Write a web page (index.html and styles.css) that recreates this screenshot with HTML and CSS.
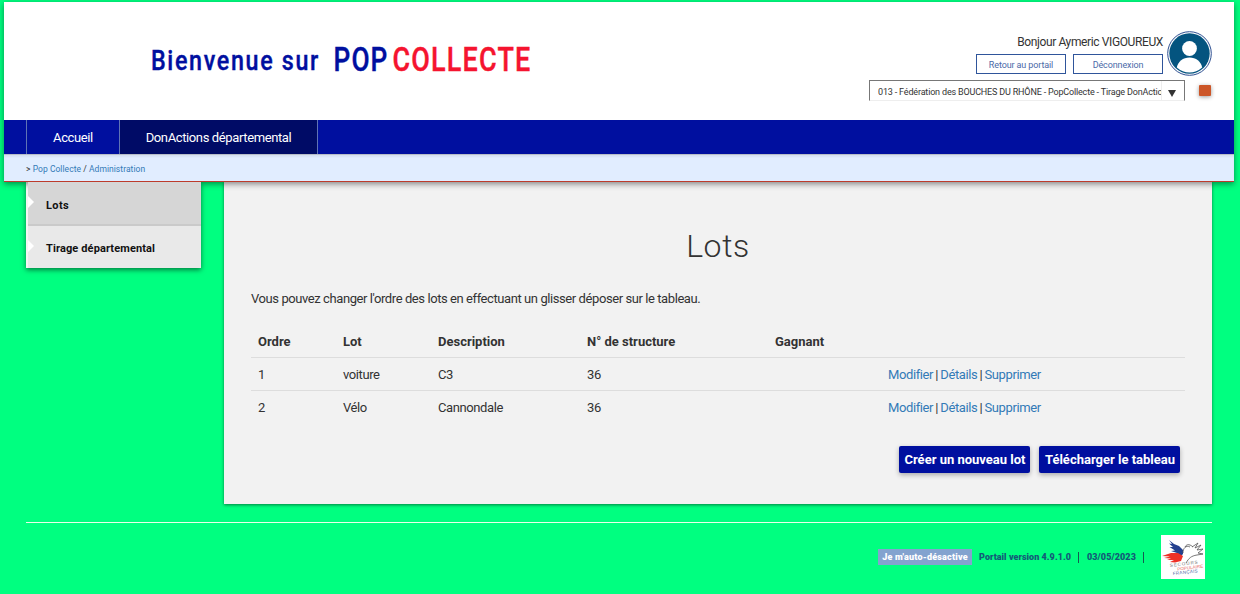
FILE: index.html
```html
<!DOCTYPE html>
<html lang="fr">
<head>
<meta charset="utf-8">
<title>Pop Collecte - Lots</title>
<link rel="stylesheet" href="styles.css">
</head>
<body>
<div class="top">
  <header class="header">
    <svg class="brand" width="400" height="50" viewBox="0 0 400 50">
      <text class="welcome" x="0" y="40" textLength="169" lengthAdjust="spacingAndGlyphs">Bienvenue sur</text>
      <text class="pop" x="182.500" y="41" textLength="55" lengthAdjust="spacingAndGlyphs">POP</text>
      <text class="collecte" x="241.500" y="41" textLength="139" lengthAdjust="spacingAndGlyphs">COLLECTE</text>
    </svg>
    <div class="account">
      <div class="account-row">
        <div class="account-info">
          <div class="hello">Bonjour Aymeric VIGOUREUX</div>
          <div class="account-buttons"><a class="outline">Retour au portail</a><a class="outline deco">Déconnexion</a></div>
        </div>
        <svg class="avatar" width="45" height="45" viewBox="0 0 45 45">
          <circle cx="22.5" cy="22.5" r="21.8" fill="#fff" stroke="#2a4d90" stroke-width="1"/>
          <circle cx="22.5" cy="22.5" r="20.2" fill="#04547f"/>
          <circle cx="22.5" cy="17.5" r="7.4" fill="#fff"/>
          <path d="M9.800 36.500C11 30.500 16 26.500 22.500 26.500S34 30.500 35.200 36.500Q29.500 41.500 22.500 41.500T9.800 36.500Z" fill="#fff"/>
        </svg>
      </div>
      <div class="account-row structure">
        <div class="select"><span class="value">013 - Fédération des BOUCHES DU RHÔNE - PopCollecte - Tirage DonActions</span><span class="arrow"><svg width="8" height="7"><path d="M0 0H8L4 7Z" fill="#333"/></svg></span></div>
        <span class="square"></span>
      </div>
    </div>
  </header>
  <nav class="nav"><a class="tab home">Accueil</a><a class="tab active">DonActions départemental</a></nav>
  <div class="crumbs">&gt; <a>Pop Collecte</a> / <a>Administration</a></div>
</div>
<div class="body">
  <aside class="side"><a class="entry current">Lots</a><a class="entry second">Tirage départemental</a></aside>
  <main class="main">
    <h1>Lots</h1>
    <p class="hint">Vous pouvez changer l'ordre des lots en effectuant un glisser déposer sur le tableau.</p>
    <table class="lots">
      <colgroup><col class="c1"><col class="c2"><col class="c3"><col class="c4"><col class="c5"><col></colgroup>
      <thead><tr><th>Ordre</th><th>Lot</th><th>Description</th><th>N° de structure</th><th>Gagnant</th><th></th></tr></thead>
      <tbody>
        <tr><td>1</td><td>voiture</td><td>C3</td><td>36</td><td></td><td class="actions"><a>Modifier</a> | <a>Détails</a> | <a>Supprimer</a></td></tr>
        <tr><td>2</td><td>Vélo</td><td>Cannondale</td><td>36</td><td></td><td class="actions"><a>Modifier</a> | <a>Détails</a> | <a>Supprimer</a></td></tr>
      </tbody>
    </table>
    <div class="buttons"><a class="btn create">Créer un nouveau lot</a><a class="btn download">Télécharger le tableau</a></div>
  </main>
</div>
<footer class="footer">
  <a class="auto">Je m'auto-désactive</a>
  <span class="version">Portail version 4.9.1.0</span><i class="bar"></i>
  <span class="date">03/05/2023</span><i class="bar last"></i>
  <svg class="spf" width="44" height="44" viewBox="0 0 44 44">
    <rect width="44" height="44" fill="#fff"/>
    <path d="M8 5L13 9L18 11L22 15L22 19L20 21L13 19L16 18L10 16L14 15.500L8.500 12L12 12L8 8.500L11 9Z" fill="#24418f"/>
    <path d="M1 21L10 18L17 18L22 21L20 26L14 27.500L9 27L13 25L6 25L10 23.500L3 23L9 21.500Z" fill="#ee3127"/>
    <path d="M22 18C22 13 25 10 29 12M24 12C26 8 30 10 32 12M31 12L37 8L34 13L40 10L36 15L42 14L37 18L42 19L36 20M36 20C30 21 28 23 25 28" fill="none" stroke="#555" stroke-width=".8"/>
    <g class="spf-text"><text x="9" y="32" textLength="28" fill="#777" transform="rotate(-7 9 32)">SECOURS</text><text x="16.500" y="35.800" textLength="26" fill="#e66b63" transform="rotate(-7 16 36)">POPULAIRE</text><text x="12" y="40" textLength="25" fill="#4b64a0" transform="rotate(-6 12 40)">FRANÇAIS</text></g>
  </svg>
</footer>
</body>
</html>
```
FILE: styles.css
```css
* { box-sizing: border-box; }
body { margin: 0; padding: 2px 6px 0 4px; height: 594px; overflow: hidden; background: #00ff80; color: #333; font: 13px/18px Roboto, sans-serif; }
a { color: #337ab7; text-decoration: none; }
.top { position: relative; background: #fff; border-bottom: 1px solid #bd3b2b; box-shadow: 0 2px 6px rgba(0,0,0,.45); }
.header { height: 118px; display: flex; justify-content: space-between; padding: 28px 22px 0 147px; }
.brand { overflow: visible; }
.brand text { font-family: Roboto, sans-serif; font-weight: 500; stroke-width: .4px; }
.brand .welcome { font-size: 28px; fill: #000f9f; stroke: #000f9f; letter-spacing: 2px; }
.brand .pop { font-size: 34px; fill: #000f9f; stroke: #000f9f; letter-spacing: 1.5px; }
.brand .collecte { font-size: 34px; fill: #f5142f; stroke: #f5142f; letter-spacing: 1.5px; }
.account { width: 343px; }
.account-row { display: flex; justify-content: flex-end; gap: 4px; }
.account-info { text-align: right; padding-top: 3px; }
.hello { font-size: 12px; line-height: 18px; letter-spacing: -.38px; }
.account-buttons { display: flex; gap: 7px; margin-top: 3px; }
.outline { width: 90px; height: 20px; border: 1px solid #2f559b; font-size: 9px; line-height: 20px; text-align: center; color: #4b6aa8; letter-spacing: -.12px; }
.avatar { margin-top: 1px; }
.structure { justify-content: flex-start; gap: 14px; margin-top: 4px; }
.select { width: 316px; height: 21px; border: 1px solid #777; border-bottom-color: #eee; display: flex; font-size: 9px; line-height: 22px; padding-left: 8px; letter-spacing: -.17px; }
.value { width: 283px; overflow: hidden; white-space: nowrap; }
.arrow { flex: 1; border-left: 1px solid #eee; padding: 3px 0 0 6px; line-height: 20px; }
.square { width: 12px; height: 11px; margin-top: 5px; background: #cc5628; border-radius: 1px; box-shadow: 0 1px 4px rgba(0,0,0,.4); }
.nav { height: 34px; background: #000f9f; padding-left: 22px; display: flex; }
.tab { color: #fff; line-height: 35px; border-right: 1px solid #5f73b5; text-align: center; letter-spacing: -.38px; }
.home { width: 94px; border-left: 1px solid #5f73b5; }
.active { width: 198px; background: #000b66; }
.crumbs { height: 27px; background: #e1edff; border-top: 1px solid #b8bec8; box-shadow: inset 0 2px 2px rgba(0,0,0,.05); padding-left: 22px; font-size: 8.500px; line-height: 28px; letter-spacing: .05px; }
.body { display: flex; gap: 23px; padding: 0 22px; align-items: flex-start; }
.side { width: 175px; box-shadow: 0 2px 5px rgba(0,0,0,.5); border-left: 2px solid #f5f5f5; }
.entry { display: block; position: relative; height: 42px; background: #e9e9e9; color: #111; font-size: 11px; font-weight: 700; line-height: 45px; padding-left: 18px; letter-spacing: .12px; }
.second { line-height: 46px; }
.current { height: 44px; background: #d6d6d6; border-bottom: 2px solid #cacaca; line-height: 47px; letter-spacing: .4px; }
.entry::before { content: ""; position: absolute; left: 0; top: 14px; border: 6px solid transparent; border-left-color: #fff; border-right: 0; }
.main { width: 988px; height: 322px; background: #f2f2f2; padding: 44px 27px 0; box-shadow: 0 1px 3px rgba(0,0,0,.5); }
h1 { margin: 0; font-size: 32px; line-height: 40px; font-weight: 300; text-align: center; letter-spacing: .6px; }
.hint { margin: 24px 0 17px; line-height: 18px; letter-spacing: -.42px; }
.lots { width: 934px; table-layout: fixed; border-collapse: collapse; }
.c1 { width: 85px; } .c2 { width: 95px; } .c3 { width: 149px; } .c4 { width: 188px; } .c5 { width: 113px; }
.lots th, .lots td { height: 33px; padding: 0 7px; text-align: left; letter-spacing: -.4px; }
.lots th { height: 32px; padding-top: 2px; font-weight: 700; border-bottom: 1px solid #ddd; letter-spacing: 0; }
.lots tbody td { padding-top: 3px; }
.lots tbody tr + tr td { border-top: 1px solid #ddd; }
.lots .actions { word-spacing: -.6px; }
.buttons { display: flex; justify-content: flex-end; gap: 9px; padding-right: 5px; margin-top: 23px; }
.btn { height: 27px; border-radius: 2px; background: #000f9f; color: #fff; font-weight: 700; line-height: 28px; text-align: center; box-shadow: 0 2px 5px rgba(0,0,0,.3); white-space: nowrap; }
.create { width: 131px; padding-left: 1px; }
.download { width: 141px; padding-left: 1px; }
.footer { margin: 18px 22px 0; border-top: 1px solid #eaffea; padding: 12px 7px 0 0; display: flex; justify-content: flex-end; align-items: center; font-size: 9px; font-weight: 900; color: #145a78; white-space: nowrap; }
.auto { background: #83a3cf; color: #fff; width: 94px; height: 16px; line-height: 16px; text-align: center; margin-right: 7px; letter-spacing: .2px; }
.version { letter-spacing: .04px; }
.date { letter-spacing: .1px; }
.bar { width: 1px; height: 11px; background: #155a50; margin: 0 8px 0 7px; }
.last { margin-right: 17px; }
.spf-text { font: 4.500px "Liberation Sans", sans-serif; }
```
